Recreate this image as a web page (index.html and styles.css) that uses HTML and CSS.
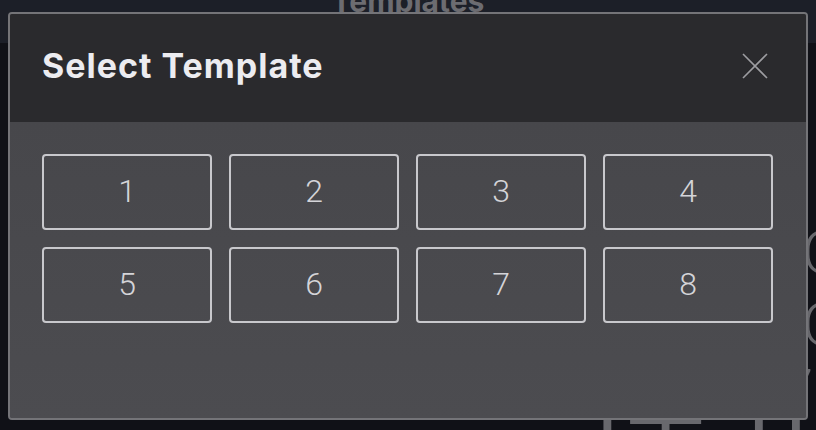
FILE: index.html
```html
<!DOCTYPE html>
<html lang="en">
<head>
<meta charset="utf-8">
<title>Select Template</title>
<link rel="stylesheet" href="styles.css">
</head>
<body>
<div class="page">
  <header class="page-header">
    <h1 class="page-title">Templates</h1>
  </header>
  <section class="page-main">
    <div class="hero-word hero-one">C</div>
    <div class="hero-word hero-two">C</div>
    <div class="hero-word hero-three">7</div>
    <div class="hero-word hero-bottom">IT IKY/</div>
  </section>
</div>

<div class="modal" role="dialog" aria-label="Select Template">
  <div class="modal-header">
    <h2 class="modal-title">Select Template</h2>
    <button class="modal-close" aria-label="Close">
      <svg width="26" height="26" viewBox="0 0 26 26"><path d="M1 1 L25 25 M25 1 L1 25" stroke="#9d9da1" stroke-width="1.6" fill="none"/></svg>
    </button>
  </div>
  <div class="modal-body">
    <div class="template-grid">
      <button class="template-card">1</button>
      <button class="template-card">2</button>
      <button class="template-card">3</button>
      <button class="template-card">4</button>
      <button class="template-card">5</button>
      <button class="template-card">6</button>
      <button class="template-card">7</button>
      <button class="template-card">8</button>
    </div>
  </div>
</div>
</body>
</html>
```

FILE: styles.css
```css
* { box-sizing: border-box; }

html, body {
  margin: 0;
  height: 100%;
}

body {
  background: #101117;
  font-family: "Inter", "Noto Sans", sans-serif;
  overflow: hidden;
}

.page {
  height: 100%;
  display: flex;
  flex-direction: column;
}

.page-header {
  height: 43px;
  background: #1c1f28;
  display: flex;
  justify-content: center;
  overflow: hidden;
}

.page-title {
  margin: -19px 0 0 0;
  font-family: "Inter", sans-serif;
  font-weight: 700;
  font-size: 30px;
  line-height: 40px;
  color: #6c6c71;
}

.page-main {
  flex: 1;
  position: relative;
  overflow: hidden;
}

.hero-word {
  position: absolute;
  font-family: "Roboto", sans-serif;
  font-weight: 300;
  color: #68686d;
  line-height: 1;
  white-space: nowrap;
}

.hero-one { left: 802px; top: 180px; font-size: 60px; }
.hero-two { left: 802px; top: 252px; font-size: 60px; }
.hero-three { left: 780px; top: 318px; font-size: 60px; }
.hero-bottom { left: 590px; top: 358px; font-size: 130px; font-weight: 300; letter-spacing: 4px; }

.modal {
  position: absolute;
  left: 8px;
  top: 12px;
  width: 800px;
  height: 408px;
  border: 2px solid #747478;
  border-radius: 4px;
  overflow: hidden;
  display: flex;
  flex-direction: column;
  background: #48484c;
}

.modal-header {
  height: 108px;
  background: #2a2a2d;
  display: flex;
  align-items: center;
  justify-content: space-between;
  padding: 0 38px 0 32px;
  flex-shrink: 0;
}

.modal-title {
  margin: 0;
  font-family: "Inter", sans-serif;
  font-weight: 700;
  font-size: 34px;
  color: #ececf0;
  letter-spacing: 1px;
  padding-bottom: 6px;
}

.modal-close {
  background: none;
  border: 0;
  padding: 0;
  width: 26px;
  height: 26px;
  display: flex;
  cursor: pointer;
  margin-bottom: 4px;
}

.modal-body {
  flex: 1;
  background: linear-gradient(180deg, #47474b 0%, #4c4c50 100%);
  padding: 32px 33px 0 32px;
}

.template-grid {
  display: grid;
  grid-template-columns: repeat(4, 1fr);
  grid-auto-rows: 76px;
  gap: 17px;
}

.template-card {
  background: transparent;
  border: 2px solid #c8c8cc;
  border-radius: 4px;
  color: #d4d4d8;
  font-family: "Roboto", sans-serif;
  font-weight: 300;
  font-size: 32px;
  display: flex;
  align-items: center;
  justify-content: center;
  padding: 0 0 3px 0;
  cursor: pointer;
}
```
